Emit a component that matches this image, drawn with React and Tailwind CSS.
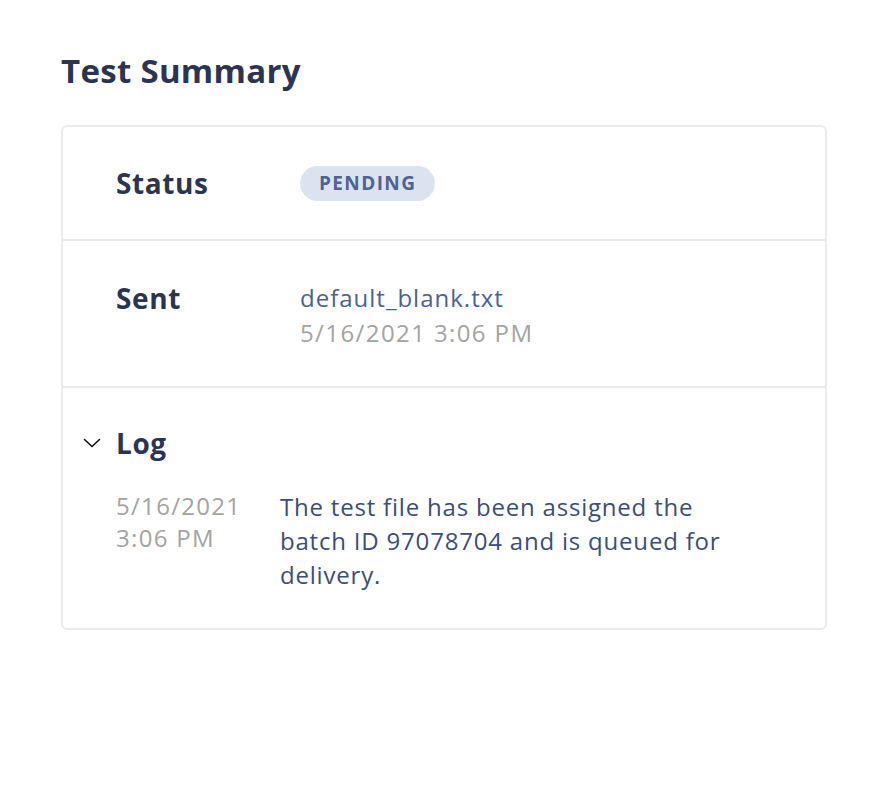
export default function App() {
  return (
    <div className="min-h-screen bg-white pt-[51px] pl-[61px]" style={{ fontFamily: "'Open Sans', 'Noto Sans', sans-serif" }}>
      <h1 className="text-[33px] leading-[40px] font-bold tracking-[0.3px] text-[#2b3552]">Test Summary</h1>

      <div className="mt-[34px] w-[766px] rounded-md border-2 border-[#ebebeb]">
        {/* Status */}
        <div className="flex items-center py-[38px] pl-[53px]">
          <div className="w-[184px] text-[28px] leading-[36px] font-bold tracking-[0.6px] text-[#2b3552]">Status</div>
          <span className="rounded-full bg-[#dce3f0] px-[19px] text-[19px] leading-[35px] font-bold tracking-[1.4px] text-[#4d6390]">
            PENDING
          </span>
        </div>

        {/* Sent */}
        <div className="flex border-t-2 border-[#ebebeb] pt-[39px] pb-[36px] pl-[53px]">
          <div className="w-[184px] text-[28px] leading-[36px] font-bold tracking-[0.6px] text-[#2b3552]">Sent</div>
          <div className="text-[24px] leading-[35px]">
            <div className="tracking-[1px] text-[#4a6391]">default_blank.txt</div>
            <div className="tracking-[1.4px] text-[#a3a3a3]">5/16/2021 3:06 PM</div>
          </div>
        </div>

        {/* Log */}
        <div className="border-t-2 border-[#ebebeb] pt-[37px] pb-[36px] pl-[20px]">
          <div className="flex items-center">
            <svg width="18" height="10" viewBox="0 0 18 10" fill="none" className="mr-[15px]">
              <polyline points="1.5,1.5 9,8.5 16.5,1.5" stroke="#111" strokeWidth="1.6" strokeLinecap="round" strokeLinejoin="round" />
            </svg>
            <span className="text-[28px] leading-[36px] font-bold tracking-[0.6px] text-[#2b3552]">Log</span>
          </div>
          <div className="mt-[29px] flex pl-[33px]">
            <div className="w-[164px] text-[24px] leading-[32px] tracking-[1.3px] text-[#a3a3a3]">
              5/16/2021
              <br />
              3:06 PM
            </div>
            <p className="w-[470px] text-[24px] leading-[34px] tracking-[0.8px] text-[#3b4e78]">
              The test file has been assigned the batch ID 97078704 and is queued for delivery.
            </p>
          </div>
        </div>
      </div>
    </div>
  );
}
